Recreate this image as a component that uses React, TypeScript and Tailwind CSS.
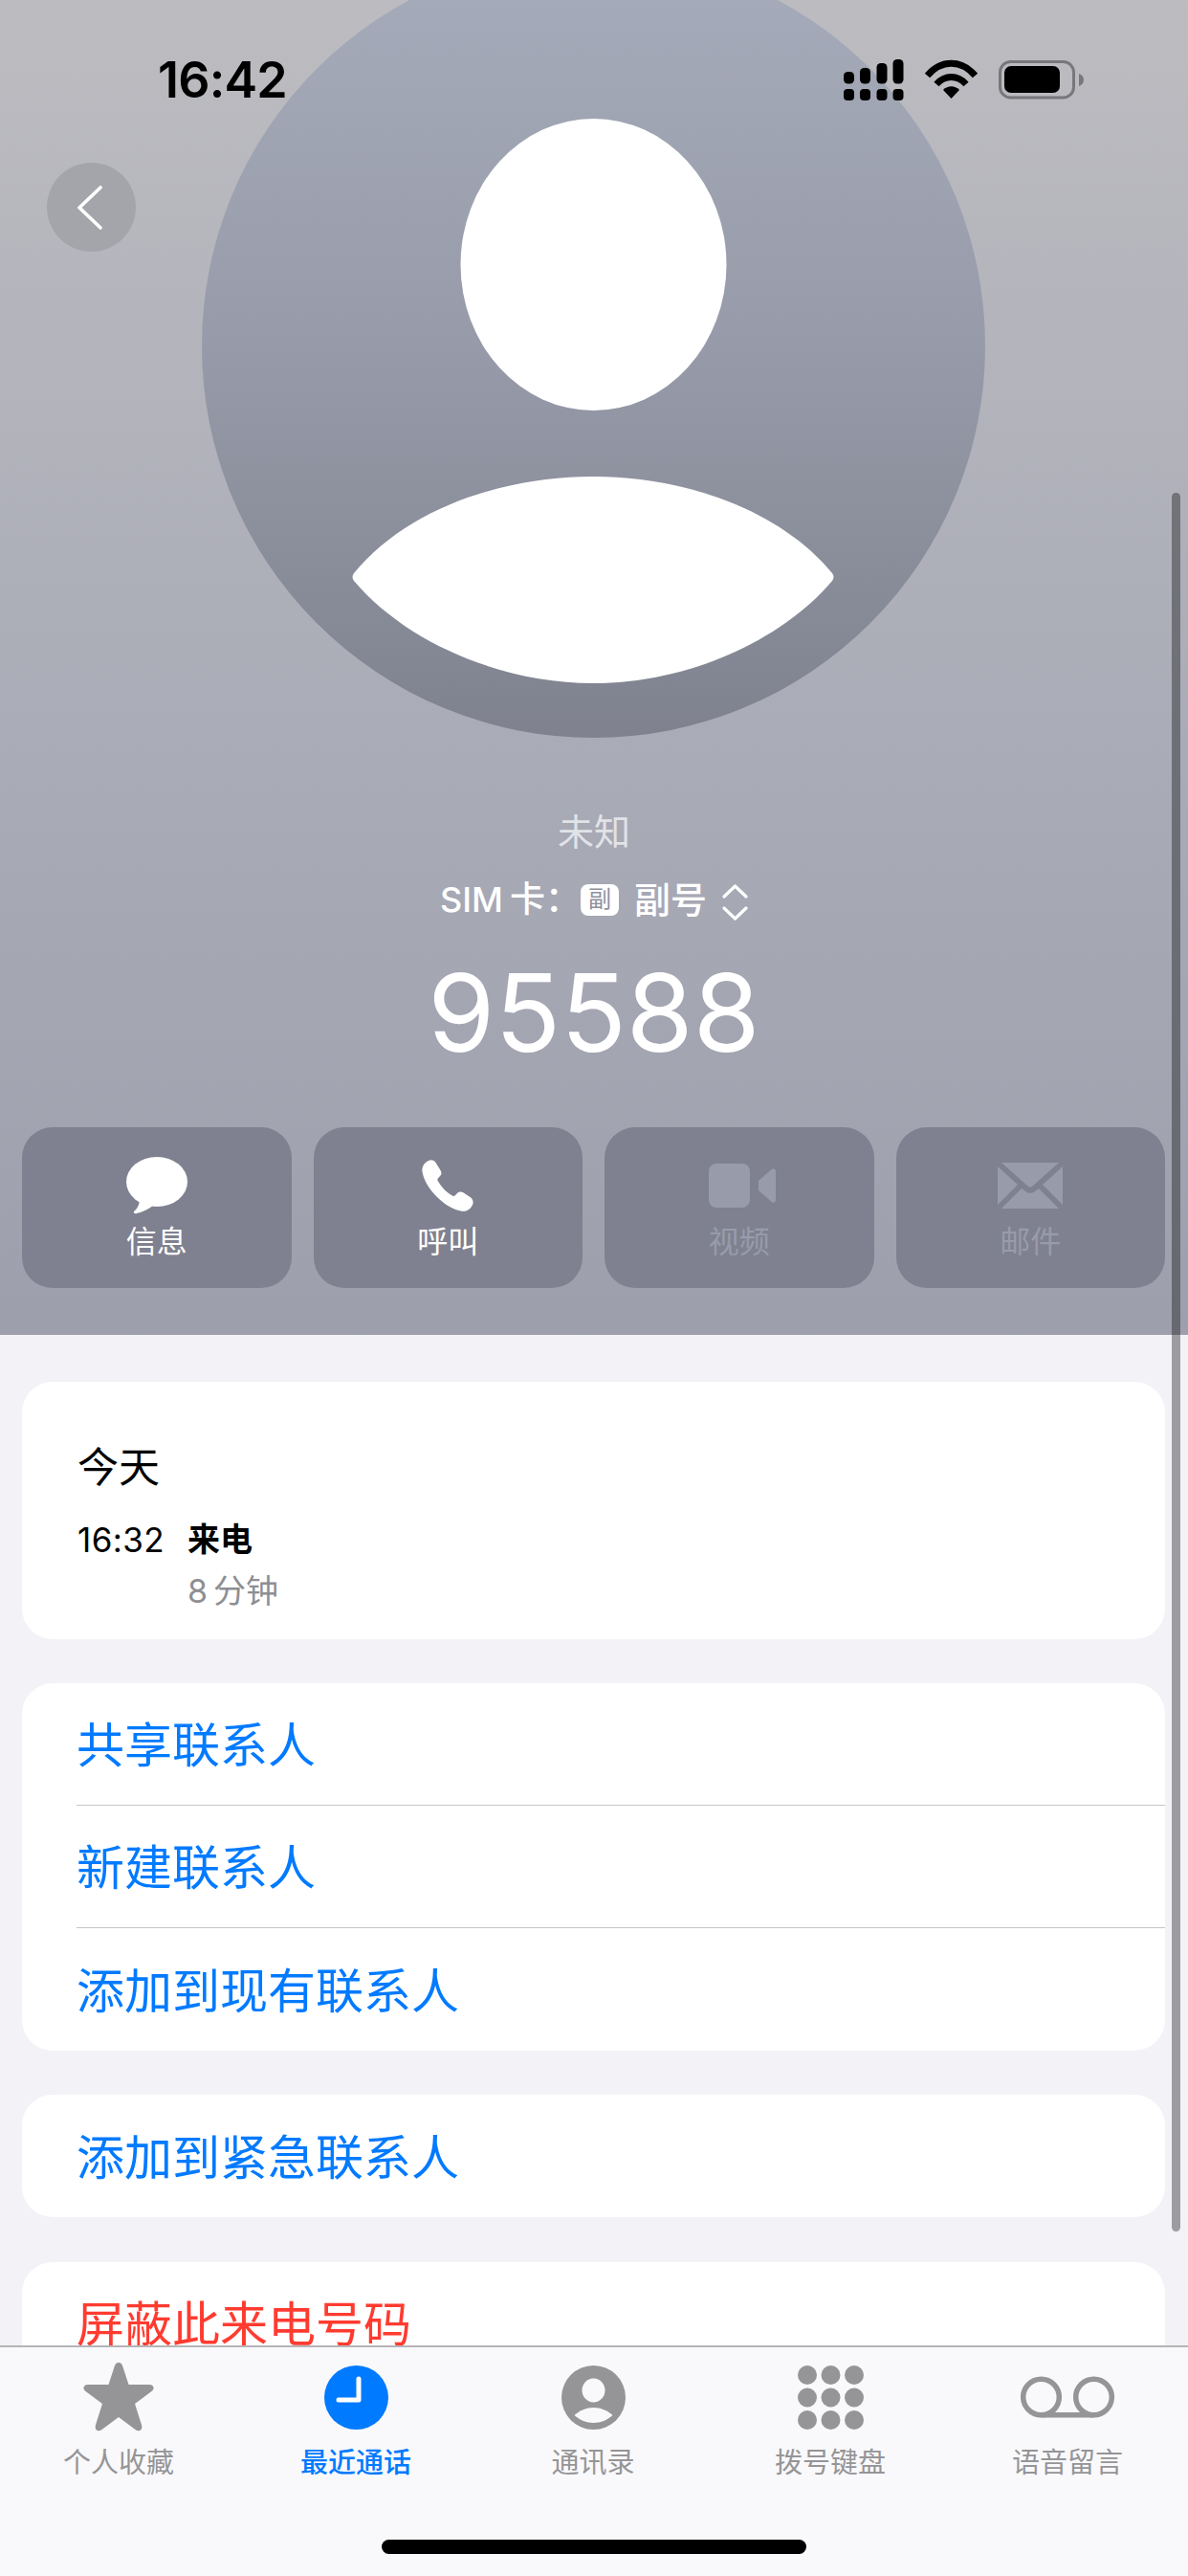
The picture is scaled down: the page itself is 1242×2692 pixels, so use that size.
const cjk = "font-['Inter','Noto_Sans_CJK_SC',sans-serif]";

function StatusBar() {
  return (
    <div className="absolute inset-x-0 top-0 h-[120px]">
      <span className="absolute left-[165px] top-[54px] font-['Inter',sans-serif] text-[52px] leading-[60px] font-semibold tracking-[-0.8px] text-black">
        16:42
      </span>
      <svg className="absolute left-[870px] top-[50px]" width="270" height="70" viewBox="870 50 270 70">
        <rect x="882" y="75" width="11" height="12.500" rx="4.500" />
        <rect x="899" y="71" width="11" height="16.500" rx="4.500" />
        <rect x="916.500" y="66" width="11" height="21.500" rx="4.500" />
        <rect x="933.500" y="62" width="11" height="25.500" rx="4.500" />
        <rect x="882" y="93" width="11" height="12" rx="4" />
        <rect x="899" y="93" width="11" height="12" rx="4" />
        <rect x="916.500" y="93" width="11" height="12" rx="4" />
        <rect x="933.500" y="93" width="11" height="12" rx="4" />
        <g fill="none" stroke="#000" strokeWidth="7">
          <path d="M969.500 79 C984 62 1005 62 1019.500 79" />
          <path d="M979 88 C988 78 1001 78 1010 88" />
        </g>
        <path d="M994.500 103 L986 94 C991 89 998 89 1003 94 Z" />
        <rect x="1045.500" y="64.500" width="77" height="37.500" rx="11" fill="none" stroke="#77777c" strokeWidth="3" />
        <rect x="1050" y="69" width="58" height="28" rx="7" />
        <path d="M1128 77 C1131 78 1133 80.500 1133 83.500 C1133 86.500 1131 89 1128 90 Z" fill="#77777c" />
      </svg>
    </div>
  );
}

function Avatar() {
  return (
    <svg className="-mt-[49px] block" width="821" height="821" viewBox="211 -49 821 821">
      <defs>
        <linearGradient id="av" x1="0" y1="0" x2="0" y2="1">
          <stop offset="0" stopColor="#a6acbb" />
          <stop offset="0.5" stopColor="#979ba9" />
          <stop offset="1" stopColor="#7f828e" />
        </linearGradient>
      </defs>
      <circle cx="620.500" cy="361.500" r="409.500" fill="url(#av)" />
      <ellipse cx="620.500" cy="276.500" rx="139" ry="152.500" fill="#fff" />
      <path
        d="M370 599 C425 532 525 498 620 498 C715 498 815 532 870 599 Q873 603 870 607 C815 672 715 714 620 714 C525 714 425 672 370 607 Q367 603 370 599 Z"
        fill="#fff"
      />
    </svg>
  );
}

function MessageIcon() {
  return (
    <svg width="66" height="60" viewBox="0 0 66 60" fill="currentColor">
      <ellipse cx="33" cy="26" rx="32" ry="26" />
      <path d="M15 44 C15 50 12 55 9 57 C8.500 59 10 59.500 12 59 C19 57.500 25 54 30 50 Z" />
    </svg>
  );
}

function PhoneIcon() {
  return (
    <svg width="54" height="54" viewBox="0 0 54 54" fill="currentColor">
      <path d="M7 1 C10 -.6 13 .6 14.500 3 L19.500 11 C21 13.500 20.600 15.500 18.800 17.300 L17 19.200 C16.200 20.200 16.200 21.300 16.800 22.300 C20.500 28.800 25.500 33.800 31.800 37.600 C32.800 38.200 34 38.100 34.800 37.200 L37 35 C38.800 33.200 41 33 43.300 34.300 L50.500 39 C53.500 41 54.500 44.500 52.800 47.500 C50.500 52 46.500 54.300 42 53.700 C33 52.300 24 47 15.500 38.500 C7 30 2 21 .5 12.500 C-.2 7.500 2.500 3 7 1 Z" />
    </svg>
  );
}

function VideoIcon() {
  return (
    <svg className="ml-[6px]" width="70" height="46" viewBox="0 0 70 46" fill="currentColor">
      <rect x="0" y="0" width="43" height="46" rx="8" />
      <path d="M52 18 L65 6.500 C67 4.500 70 5 70 8 L70 38 C70 41 67 41.500 65 39.500 L52 28 Z" />
    </svg>
  );
}

function MailIcon() {
  return (
    <svg width="68" height="48" viewBox="0 0 68 48" fill="currentColor">
      <path d="M4 0 H64 L37 24 C35 26 33 26 31 24 Z" />
      <path d="M0 4 L21 23 L0 44 Z" />
      <path d="M68 4 L47 23 L68 44 Z" />
      <path d="M4 48 L25 27 L29 30 C32 32.500 36 32.500 39 30 L43 27 L64 48 Z" />
    </svg>
  );
}

function ActionButton({ label, icon, disabled }: { label: string; icon: React.ReactNode; disabled?: boolean }) {
  return (
    <div
      className={`flex h-[168px] flex-col items-center rounded-[32px] bg-[#7f8190] pt-[32px] ${
        disabled ? "text-[#989baa]" : "text-white"
      }`}
    >
      <div className="flex h-[58px] items-center justify-center">{icon}</div>
      <span className={`mt-[11px] text-[32px] leading-[38px] ${cjk}`}>{label}</span>
    </div>
  );
}

function Header() {
  return (
    <div className="relative flex h-[1395px] flex-col items-center overflow-hidden bg-gradient-to-b from-[#bcbcc0] via-[#a8aab6] via-60% to-[#9e9fac]">
      <Avatar />
      <StatusBar />
      <button className="absolute left-[49px] top-[170px] flex h-[93px] w-[93px] items-center justify-center rounded-full bg-[#a4a5aa]">
        <svg className="-ml-[4px]" width="28" height="46" viewBox="0 0 28 46" fill="none" stroke="#fff" strokeWidth="3.600" strokeLinecap="round" strokeLinejoin="round">
          <path d="M25 2 L3 23 L25 44" />
        </svg>
      </button>
      <div className={`mt-[75px] text-[38px] leading-[44px] text-[#e2e3e7] ${cjk}`}>未知</div>
      <div className={`mt-[27px] flex h-[44px] items-center text-[37px] font-medium leading-[44px] text-white ${cjk}`}>
        <span className="text-[36px]">SIM</span>
        <span className="ml-[7px]">卡：</span>
        <span className="flex h-[33px] w-[40px] items-center justify-center rounded-[8px] bg-white text-[24px] font-normal text-[#8e909c]">
          副
        </span>
        <span className="ml-[16px] text-[38px]">副号</span>
        <svg className="ml-[16px] mt-[5px]" width="27" height="38" viewBox="0 0 27 38" fill="none" stroke="#fff" strokeWidth="3.200" strokeLinecap="round" strokeLinejoin="round">
          <path d="M2 13 L13.500 2 L25 13" />
          <path d="M2 25 L13.500 36 L25 25" />
        </svg>
      </div>
      <div className="mt-[36px] font-['Inter',sans-serif] text-[113px] leading-[120px] font-normal text-white">95588</div>
      <div className="mt-[60px] grid w-full grid-cols-4 gap-x-[23px] pl-[23px] pr-[24px]">
        <ActionButton label="信息" icon={<MessageIcon />} />
        <ActionButton label="呼叫" icon={<PhoneIcon />} />
        <ActionButton label="视频" icon={<VideoIcon />} disabled />
        <ActionButton label="邮件" icon={<MailIcon />} disabled />
      </div>
    </div>
  );
}

function Row({ label, red, last }: { label: string; red?: boolean; last?: boolean }) {
  return (
    <div className="pl-[57px]">
      <div
        className={`flex h-[128px] items-center text-[50px] ${cjk} ${red ? "pt-[2px] text-[#ff3b30]" : "pt-[4px] text-[#007aff]"} ${
          last ? "" : "border-b border-[#c6c6c8]"
        }`}
      >
        {label}
      </div>
    </div>
  );
}

function TabItem({ label, icon, active }: { label: string; icon: React.ReactNode; active?: boolean }) {
  return (
    <div className={`flex flex-col items-center ${active ? "text-[#007aff]" : "text-[#959597]"}`}>
      <div className="flex h-[74px] items-center justify-center">{icon}</div>
      <span className={`mt-[14px] text-[29px] leading-[36px] ${active ? "font-medium" : ""} ${cjk}`}>{label}</span>
    </div>
  );
}

function TabBar() {
  return (
    <div className="absolute inset-x-0 bottom-0 h-[241px] border-t-2 border-[#b5b5b8] bg-[#f9f9fb]">
      <div className="grid grid-cols-5 pr-[2px] pt-[15px]">
        <TabItem
          label="个人收藏"
          icon={
            <svg width="74" height="72" viewBox="0 0 74 72" fill="currentColor">
              <path d="M37 0 C39.500 0 40.800 2 41.500 4.500 L47.500 23 L69 23 C74 23 75 27.500 71.500 30 L54 43 L61 65 C62.500 70.500 58.500 73 54.500 70 L37 57 L19.500 70 C15.500 73 11.500 70.500 13 65 L20 43 L2.500 30 C-1 27.500 0 23 5 23 L26.500 23 L32.500 4.500 C33.200 2 34.500 0 37 0 Z" />
            </svg>
          }
        />
        <TabItem
          active
          label="最近通话"
          icon={
            <svg width="67" height="67" viewBox="0 0 67 67">
              <circle cx="33.500" cy="33.500" r="33.500" fill="#007aff" />
              <path d="M36 14 V36 H15" fill="none" stroke="#fff" strokeWidth="5" strokeLinecap="round" strokeLinejoin="round" />
            </svg>
          }
        />
        <TabItem
          label="通讯录"
          icon={
            <svg width="67" height="67" viewBox="0 0 67 67" fill="currentColor">
              <circle cx="33.500" cy="33.500" r="33.500" />
              <ellipse cx="33.500" cy="26" rx="12" ry="12.500" fill="#f9f9fb" />
              <path d="M13.500 52 C19 47 26 44 33.500 44 C41 44 48 47 53.500 52 C48 57 41 60 33.500 60 C26 60 19 57 13.500 52 Z" fill="#f9f9fb" />
            </svg>
          }
        />
        <TabItem
          label="拨号键盘"
          icon={
            <svg width="69" height="67" viewBox="0 0 69 67" fill="currentColor">
              {[10, 34.500, 59].map((cx) =>
                [10, 33.500, 57].map((cy) => <circle key={`${cx}-${cy}`} cx={cx} cy={cy} r="10" />),
              )}
            </svg>
          }
        />
        <TabItem
          label="语音留言"
          icon={
            <svg width="98" height="44" viewBox="0 0 98 44" fill="none" stroke="currentColor" strokeWidth="5.500">
              <circle cx="21.500" cy="22" r="18.800" />
              <circle cx="76.500" cy="22" r="18.800" />
              <path d="M21.500 40.800 H76.500" />
            </svg>
          }
        />
      </div>
      <div className="absolute bottom-[23px] left-[399px] h-[15px] w-[444px] rounded-full bg-black" />
    </div>
  );
}

export default function App() {
  return (
    <div className="relative h-[2692px] w-[1242px] overflow-hidden bg-[#f2f2f7]">
      <Header />
      <div className="flex flex-col gap-[46px] pl-[23px] pr-[24px] pt-[49px]">
        <div className={`h-[269px] rounded-[32px] bg-white pl-[58px] pt-[64px] ${cjk}`}>
          <div className="text-[43px] leading-[50px] text-black">今天</div>
          <div className="mt-[31px] flex text-[34px] leading-[40px] text-black">
            <span className="w-[115px] text-[35px] tracking-[0.4px]">16:32</span>
            <div>
              <div className="font-semibold">来电</div>
              <div className="mt-[14px] text-[#8e8e93]">
                8<span className="ml-[6px]">分钟</span>
              </div>
            </div>
          </div>
        </div>
        <div className="overflow-hidden rounded-[32px] bg-white">
          <Row label="共享联系人" />
          <Row label="新建联系人" />
          <Row label="添加到现有联系人" last />
        </div>
        <div className="overflow-hidden rounded-[32px] bg-white">
          <Row label="添加到紧急联系人" last />
        </div>
        <div className="mt-[1px] overflow-hidden rounded-[32px] bg-white">
          <Row label="屏蔽此来电号码" red last />
        </div>
      </div>
      <div className="absolute right-[8px] top-[515px] h-[1817px] w-[9px] rounded-full bg-black/35" />
      <TabBar />
    </div>
  );
}
